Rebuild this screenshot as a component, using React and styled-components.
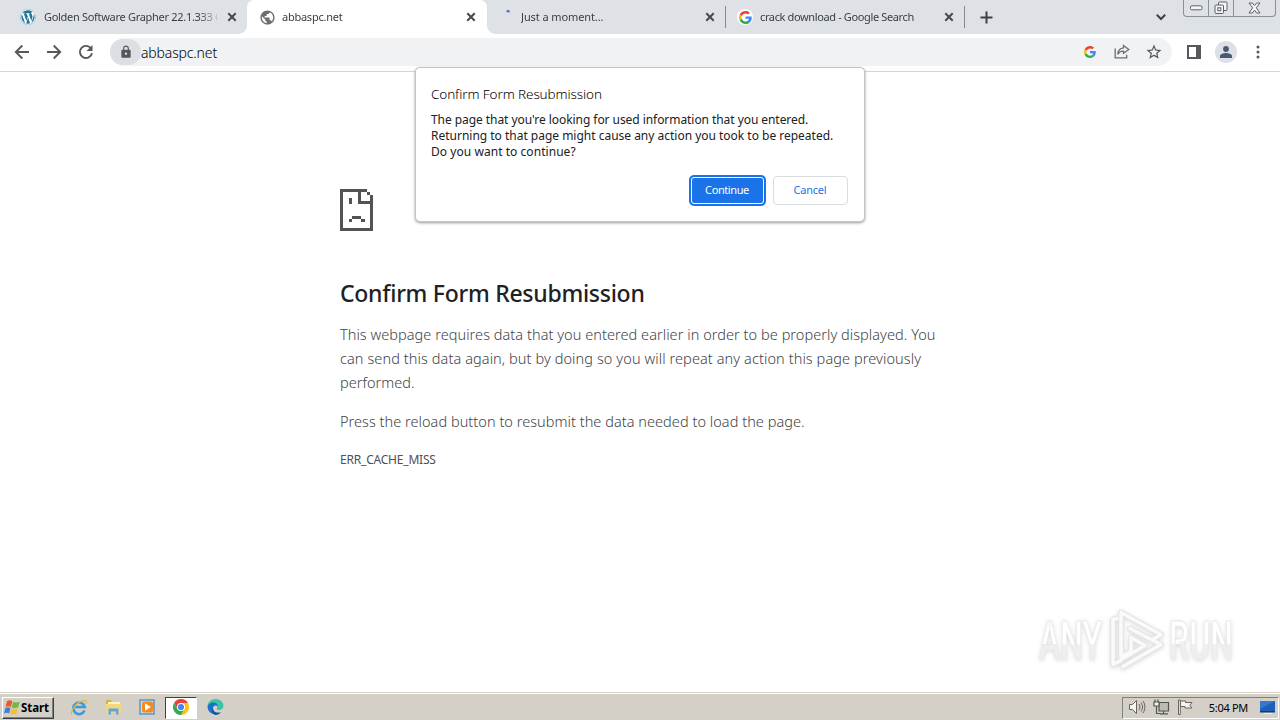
import styled, { createGlobalStyle, css } from "styled-components";
import { FaWordpress } from "react-icons/fa";
import { MdPublic, MdLock, MdStarBorder } from "react-icons/md";

const App = () => {
  return (
    <>
      <GlobalStyle />
      <Desktop>
        <TabStrip />
        <Toolbar />
        <Viewport>
          <ErrorPage />
          <Watermark />
        </Viewport>
        <Taskbar />
        <ConfirmDialog />
      </Desktop>
    </>
  );
};

const tabs = [
  { title: "Golden Software Grapher 22.1.333 C", icon: "wordpress", ls: "-0.3px", gap: 8 },
  { title: "abbaspc.net", icon: "globe", active: true, ls: "-0.25px", gap: 7 },
  { title: "Just a moment...", icon: "spinner", ls: "-0.1px", gap: 7 },
  { title: "crack download - Google Search", icon: "google", ls: "-0.37px", gap: 7 },
];

const TabStrip = () => (
  <Strip>
    {tabs.map((tab) => (
      <Tab key={tab.title} $active={tab.active} $divider={tab.icon === "spinner" || tab.icon === "google"}>
        <TabIcon>
          <Favicon name={tab.icon} />
        </TabIcon>
        <TabTitle $ls={tab.ls} $gap={tab.gap}>
          {tab.title}
        </TabTitle>
        <CloseIcon />
      </Tab>
    ))}
    <NewTab>
      <svg width="13" height="13" viewBox="0 0 13 13">
        <path d="M6.5 .5v12M.5 6.5h12" stroke="#3c4043" strokeWidth="2" />
      </svg>
    </NewTab>
    <Spacer />
    <TabSearch>
      <svg width="12" height="8" viewBox="0 0 12 8">
        <path d="M1.8 1.8 6 6l4.2-4.2" fill="none" stroke="#3c4043" strokeWidth="2" />
      </svg>
    </TabSearch>
    <Caption />
  </Strip>
);

const Favicon = ({ name }) => {
  if (name === "wordpress")
    return (
      <Round>
        <FaWordpress size={16} color="#21759b" />
      </Round>
    );
  if (name === "globe") return <MdPublic size={17} color="#6b6e72" />;
  if (name === "google")
    return (
      <Round>
        <GoogleLogo size={13} />
      </Round>
    );
  return (
    <svg width="16" height="16" viewBox="0 0 16 16">
      <path d="M8.7 1.7 11.6 2.8" stroke="#4a6fc4" strokeWidth="2" />
    </svg>
  );
};

const GoogleLogo = ({ size }) => (
  <svg width={size} height={size} viewBox="0 0 48 48">
    <path fill="#ea4335" d="M24 9.5c3.5 0 6.7 1.2 9.2 3.6l6.9-6.9C35.9 2.4 30.5 0 24 0 14.6 0 6.5 5.4 2.6 13.2l8 6.2C12.5 13.7 17.7 9.5 24 9.5z" />
    <path fill="#4285f4" d="M47 24.6c0-1.6-.2-3.1-.4-4.6H24v9h12.9c-.6 3-2.2 5.5-4.7 7.2l7.7 6C44.4 38 47 31.8 47 24.6z" />
    <path fill="#fbbc05" d="M10.5 28.6a14.5 14.5 0 0 1 0-9.2l-8-6.2a24 24 0 0 0 0 21.6z" />
    <path fill="#34a853" d="M24 48c6.5 0 11.9-2.1 15.9-5.8l-7.7-6c-2.2 1.5-4.9 2.3-8.2 2.3-6.3 0-11.6-4.2-13.5-9.900l-8 6.200C6.500 42.600 14.600 48 24 48z" />
  </svg>
);

const CloseIcon = () => (
  <svg width="10" height="10" viewBox="0 0 10 10">
    <path d="m1.3 1.3 7.4 7.4m0-7.4L1.3 8.7" stroke="#45484c" strokeWidth="2" />
  </svg>
);

const Caption = () => (
  <CaptionBar>
    <CaptionButton $w={24}>
      <svg width="13" height="6" viewBox="0 0 13 6">
        <rect x=".5" y=".8" width="11.5" height="4" rx="1.2" fill="#f4f5f7" stroke="#5c6068" />
      </svg>
    </CaptionButton>
    <CaptionButton $w={25}>
      <svg width="14" height="14" viewBox="0 0 14 14" fill="#f4f5f7" stroke="#5c6068">
        <rect x="4.5" y="1" width="8.5" height="8.5" rx="1" />
        <rect x="1" y="4" width="8.5" height="8.5" rx="1" />
        <rect x="3.8" y="6.8" width="3" height="3" />
      </svg>
    </CaptionButton>
    <CaptionButton $w={42}>
      <svg width="13" height="12" viewBox="0 0 13 12">
        <path
          d="M1 1h3.3l2.2 2.5L8.7 1H12L8.3 5.8 12 11H8.7L6.5 8.2 4.3 11H1l3.7-5.2z"
          fill="#f4f5f7"
          stroke="#5c6068"
        />
      </svg>
    </CaptionButton>
  </CaptionBar>
);

const Toolbar = () => (
  <Bar>
    <NavIcon viewBox="0 0 16 16">
      <path d="M15 8H2M8.3 1.5 1.8 8l6.5 6.5" />
    </NavIcon>
    <NavIcon viewBox="0 0 16 16">
      <path d="M1 8h13M7.7 1.5 14.2 8l-6.5 6.5" />
    </NavIcon>
    <NavIcon viewBox="0 0 16 16">
      <path d="M13.2 4.7A6.1 6.1 0 1 0 14 9.2" />
      <path d="M14.5 1v6h-6z" fill="#55585c" stroke="none" />
    </NavIcon>
    <Omnibox>
      <LockChip>
        <MdLock size={14} color="#54575b" />
      </LockChip>
      <Address>abbaspc.net</Address>
      <Spacer />
      <OmniIcons>
        <GoogleLogo size={12} />
        <svg width="16" height="15" viewBox="0 0 16 15" fill="none" stroke="#6a6d71" strokeWidth="1.3">
          <path d="M1.2 4.5v9.3h11.5v-3" />
          <path d="M9.5 1.5 14.8 5.5 9.5 9.3V7.1C7 7 5 7.9 3.8 10.4 4 6.8 6 4.3 9.5 3.9z" />
        </svg>
        <MdStarBorder size={18} color="#54575b" />
      </OmniIcons>
    </Omnibox>
    <RightIcons>
      <svg width="14" height="14" viewBox="0 0 14 14">
        <path d="M1 1h12v12H1z" fill="none" stroke="#55585c" strokeWidth="2" />
        <path d="M9 1h4v12H9z" fill="#55585c" />
      </svg>
      <Avatar>
        <svg width="12" height="12" viewBox="0 0 12 12" fill="#4a5775">
          <circle cx="6" cy="3" r="2.9" />
          <path d="M0 12V10c0-2 3.5-3 6-3s6 1 6 3v2z" />
        </svg>
      </Avatar>
      <svg width="4" height="14" viewBox="0 0 4 14" fill="#55585c">
        <circle cx="2" cy="2" r="1.5" />
        <circle cx="2" cy="7" r="1.5" />
        <circle cx="2" cy="12" r="1.5" />
      </svg>
    </RightIcons>
  </Bar>
);

const ErrorPage = () => (
  <Article>
    <svg width="33" height="42" viewBox="0 0 33 42" fill="#535353" shapeRendering="crispEdges">
      <path d="M0 0h27v3H3v36h27V15H18V3h3v9h9V9h3v33H0z" />
      <path d="M27 3h3v3h-3zM30 6h3v3h-3zM9 9h3v6H9zM12 27h9v3h-9zM9 30h3v3H9zM21 30h4v3h-4z" />
    </svg>
    <Heading>Confirm Form Resubmission</Heading>
    <Copy>
      <Line $ls="0.05px">This webpage requires data that you entered earlier in order to be properly displayed. You</Line>
      <Line $ls="0.09px">can send this data again, but by doing so you will repeat any action this page previously</Line>
      <Line $ls="0.03px">performed.</Line>
    </Copy>
    <Copy>
      <Line $ls="0.04px">Press the reload button to resubmit the data needed to load the page.</Line>
    </Copy>
    <ErrorCode>ERR_CACHE_MISS</ErrorCode>
  </Article>
);

const ConfirmDialog = () => (
  <Dialog>
    <DialogTitle>Confirm Form Resubmission</DialogTitle>
    <DialogText>
      <Line $ls="-0.06px">The page that you're looking for used information that you entered.</Line>
      <Line $ls="-0.01px">Returning to that page might cause any action you took to be repeated.</Line>
      <Line $ls="0.05px">Do you want to continue?</Line>
    </DialogText>
    <Actions>
      <Button $primary>Continue</Button>
      <Button>Cancel</Button>
    </Actions>
  </Dialog>
);

const markPath = "M86 52V8l40 22-8 5M82 14l-4 1v45l8-4M95 24l31 16-38 22M86 52l10-5V33l14 8-24 14";

const Watermark = () => (
  <Mark width="204" height="70" viewBox="0 0 204 70">
    <defs>
      <linearGradient id="sheen" x1="0" y1="0" x2="0" y2="1">
        <stop offset="0.55" stopColor="#fff" />
        <stop offset="0.56" stopColor="#efefef" />
      </linearGradient>
    </defs>
    <g fill="url(#sheen)" stroke="#e9e9e9" strokeWidth="0.8">
      <text x="4" y="53" textLength="63" lengthAdjust="spacingAndGlyphs">ANY</text>
      <text x="134" y="53" textLength="64" lengthAdjust="spacingAndGlyphs">RUN</text>
    </g>
    <g fill="none" strokeLinejoin="round" strokeLinecap="round" transform="translate(0 -1.5)">
      <path d={markPath} stroke="#e4e4e4" strokeWidth="5.5" />
      <path d={markPath} stroke="#fafafa" strokeWidth="3.5" />
    </g>
  </Mark>
);

const Taskbar = () => (
  <Task>
    <Start>
      <svg width="16" height="15" viewBox="0 0 16 15">
        <path d="M3 1.2c2-1.2 3.8-1 5.3 0L6.8 7c-1.5-1-3.3-1-5.3 0z" fill="#e8592b" />
        <path d="M9 1.7c1.5 1 4 1 6.8 0L14.2 7.3c-2 1-4.5 1.2-6.6.1z" fill="#74b83f" />
        <path d="M1.3 8c2-1.2 3.8-1 5.2 0l-1.4 5.5c-1.5-1-3.3-1-5.1 0z" fill="#3e82d0" />
        <path d="M7.4 8.4c1.5 1 4 1 6.5 0l-1.4 5.3c-2 1-4.5 1.1-6.5.1z" fill="#f5c02c" />
      </svg>
      <span>Start</span>
    </Start>
    <QuickLaunch>
      <Launcher>
        <svg width="18" height="17" viewBox="0 0 18 17" fill="none">
          <path d="M14.5 11.5a5.8 5.8 0 1 1 .3-3.5H5" stroke="#3c9bdb" strokeWidth="2.6" />
          <path d="M2 15.5C-.5 13 6 4 12 1.8c3.5-1.3 5 .2 3.8 2.8" stroke="#e8b73a" strokeWidth="1.3" />
        </svg>
      </Launcher>
      <Launcher>
        <svg width="17" height="16" viewBox="0 0 17 16">
          <path d="M1 1h5l1 2h8v10H1z" fill="#d9ae4c" />
          <path d="M3 3h12v6H3z" fill="#fbf3c4" />
          <path d="M1 5h15v8.5H1z" fill="#f2d680" />
          <path d="M3.5 15.5V9.5h10v6h-2.5v-3H6v3z" fill="#5fa9d6" />
        </svg>
      </Launcher>
      <Launcher>
        <svg width="17" height="16" viewBox="0 0 17 16">
          <rect x="1" y="1" width="14" height="14" fill="#c9def2" stroke="#5c93c8" strokeWidth="1.5" />
          <rect x="3" y="2.5" width="11" height="11" rx="2" fill="#f28a1c" />
          <path d="m6 4.200 6 3.800-6 3.800z" fill="#fff" />
        </svg>
      </Launcher>
      <Launcher $pressed>
        <svg width="16" height="16" viewBox="0 0 16 16">
          <path d="M1.07 4A8 8 0 0 1 14.93 4H8L4.5 10z" fill="#ea4335" />
          <path d="M14.93 4A8 8 0 0 1 8 16L11.5 10 8 4z" fill="#fbc116" />
          <path d="M1.07 4 4.5 10 8 12l3.5-2L8 16A8 8 0 0 1 1.07 4z" fill="#34a853" />
          <circle cx="8" cy="8" r="4" fill="#fff" />
          <circle cx="8" cy="8" r="3.1" fill="#4285f4" />
        </svg>
      </Launcher>
      <Launcher>
        <svg width="17" height="16" viewBox="0 0 17 16">
          <path d="M.6 8.5C0 4 3.5 0 8.5 0c4.5 0 8 3 8 6.5 0 3-2 4.5-4.5 4.5-2 0-2.7-.8-2-1.800.8-1.500.3-3.700-2.500-3.700-3 0-5.800 1-6.900 3z" fill="#3cc4a4" />
          <path d="M.6 8.5C.6 5.5 3.5 3.5 6.5 3.5c3 0 4.5 2 4 4.2-1.5-2-4.5-1.2-4.5 2 0 3 3 5 8 3.5A8 8 0 0 1 .6 8.5z" fill="#1673c8" />
          <path d="M6 9.7c0 3 3 5 8 3.5A8 8 0 0 1 8.5 16C5 14.5 4 10 6 9.7z" fill="#15509c" />
        </svg>
      </Launcher>
    </QuickLaunch>
    <Spacer />
    <Tray>
      <svg width="18" height="16" viewBox="0 0 18 16" fill="none" stroke="#66645f">
        <path d="M1.5 5.5h3l4-4v13l-4-4h-3z" fill="#f6f5f2" />
        <path d="M11 5c1.2 2 1.2 4 0 6M13 3.5c2 3 2 6 0 9M15 2c2.5 4 2.5 8 0 12" />
      </svg>
      <svg width="17" height="17" viewBox="0 0 17 17" fill="none" stroke="#56544f" strokeWidth="1.2">
        <path d="M6 3.5h9.5v8.5H6z" fill="#bdbbb5" />
        <path d="M1 3h5v4H1z" fill="#f6f5f2" />
        <path d="M2 3V.5M5 3V.5M3.5 7v7.5h4M7 14.8h8M10.5 12v3" />
      </svg>
      <svg width="16" height="16" viewBox="0 0 16 16" fill="#f6f5f2" stroke="#66645f">
        <path d="M1.5 1h1.8v14.5H1.5z" />
        <path d="M3.5 2h5v1.5H15L12.8 6.3 15 9H8V7.5H3.5z" />
      </svg>
      <Clock>5:04 PM</Clock>
      <svg width="17" height="15" viewBox="0 0 17 15">
        <path d="M1 1h15v10H1z" fill="#1b5fb8" />
        <path d="M1 1h15L1 9z" fill="#3478cc" />
        <path d="M1 11h15v1.5H1z" fill="#173a68" />
        <path d="M5 13h8v1H5z" fill="#e8eef5" />
      </svg>
    </Tray>
  </Task>
);

const GlobalStyle = createGlobalStyle`
  * {
    box-sizing: border-box;
  }
  body {
    margin: 0;
    overflow: hidden;
    background: #fff;
    font-family: "Noto Sans", "Open Sans", sans-serif;
  }
  svg {
    display: block;
    flex-shrink: 0;
  }
`;

const Desktop = styled.div`
  position: relative;
  display: flex;
  flex-direction: column;
  width: 1280px;
  height: 720px;
  background: #fff;
`;

const Spacer = styled.div`
  flex: 1;
`;

const Strip = styled.header`
  display: flex;
  height: 34px;
  padding-left: 8px;
  background: #dee1e6;
`;

const Tab = styled.div`
  position: relative;
  display: flex;
  align-items: center;
  width: ${({ $active }) => ($active ? 240 : 239)}px;
  height: 34px;
  padding: 0 ${({ $active }) => ($active ? 11 : 10)}px 0 12px;
  color: #3c4043;

  ${({ $active }) =>
    $active &&
    css`
      background: #fff;
      border-radius: 7px 7px 0 0;

      &::before,
      &::after {
        content: "";
        position: absolute;
        bottom: 0;
        width: 8px;
        height: 8px;
      }
      &::before {
        left: -8px;
        background: radial-gradient(circle at 0 0, transparent 7.5px, #fff 8px);
      }
      &::after {
        right: -8px;
        background: radial-gradient(circle at 100% 0, transparent 7.5px, #fff 8px);
      }
    `}

  ${({ $divider }) =>
    $divider &&
    css`
      padding: 0 10px 0 11px;
      border-right: 1px solid transparent;
      border-image: linear-gradient(transparent 7px, #85888d 7px, #85888d 27px, transparent 27px) 1;
    `}
`;

const TabIcon = styled.span`
  display: flex;
  align-items: center;
  justify-content: center;
  width: 16px;
  height: 16px;
`;

const Round = styled.span`
  display: flex;
  align-items: center;
  justify-content: center;
  flex-shrink: 0;
  width: 16px;
  height: 16px;
  border-radius: 50%;
  background: #fff;
`;

const TabTitle = styled.span`
  flex: 1;
  margin: 0 10px 0 ${({ $gap }) => $gap}px;
  overflow: hidden;
  white-space: nowrap;
  font-size: 11px;
  line-height: 16px;
  letter-spacing: ${({ $ls }) => $ls};
  mask-image: linear-gradient(to right, #000 155px, transparent 177px);
`;

const NewTab = styled.div`
  display: flex;
  align-items: center;
  margin-left: 15px;
`;

const TabSearch = styled.div`
  display: flex;
  align-items: center;
  margin-right: 16px;
`;

const CaptionBar = styled.div`
  display: flex;
  height: 17px;
  margin-right: 4px;
  border: 1px solid #8b8f96;
  border-top: 0;
  border-radius: 0 0 4px 4px;
`;

const CaptionButton = styled.span`
  display: flex;
  align-items: center;
  justify-content: center;
  width: ${({ $w }) => $w}px;

  & + & {
    border-left: 1px solid #8b8f96;
  }
`;

const Bar = styled.div`
  display: flex;
  align-items: center;
  height: 38px;
  padding: 0 20px 2px 14px;
  border-bottom: 1px solid #d3d5d8;
`;

const NavIcon = styled.svg`
  width: 16px;
  height: 16px;
  margin-right: 16px;
  fill: none;
  stroke: #55585c;
  stroke-width: 1.9;
`;

const Omnibox = styled.div`
  display: flex;
  align-items: center;
  width: 1063px;
  height: 28px;
  border-radius: 14px;
  background: #f0f2f4;
`;

const LockChip = styled.span`
  display: flex;
  align-items: center;
  justify-content: center;
  width: 31px;
  height: 26px;
  border-radius: 13px;
  background: #dcdfe3;
`;

const Address = styled.span`
  padding-top: 1px;
  color: #000;
  font-size: 14px;
  font-weight: 300;
  letter-spacing: -0.15px;
`;

const OmniIcons = styled.span`
  display: flex;
  align-items: center;
  gap: 18px;
  margin-right: 9px;

  svg:last-child {
    margin-left: -3px;
  }
`;

const RightIcons = styled.div`
  display: flex;
  align-items: center;
  gap: 14px;
  padding-left: 15px;

  svg:last-child {
    margin-left: 5px;
  }
`;

const Avatar = styled.span`
  display: flex;
  align-items: center;
  justify-content: center;
  width: 22px;
  height: 22px;
  border-radius: 50%;
  background: #dde0e5;

  && svg {
    margin-left: 0;
  }
`;

const Viewport = styled.main`
  position: relative;
  flex: 1;
  padding-top: 117px;
`;

const Article = styled.article`
  width: 600px;
  margin: 0 auto;
  color: #4d5054;
`;

const Heading = styled.h1`
  margin: 47px 0 0;
  color: #202124;
  font-size: 23px;
  font-weight: 500;
  line-height: 31px;
  letter-spacing: -0.27px;
  white-space: nowrap;
`;

const Copy = styled.p`
  margin: 13px 0 0;
  color: #404347;
  font-size: 14.5px;
  font-weight: 300;
  line-height: 24px;

  & + & {
    margin-top: 15px;
  }
`;

const Line = styled.span`
  display: block;
  white-space: nowrap;
  letter-spacing: ${({ $ls }) => $ls};
`;

const ErrorCode = styled.div`
  margin-top: 17px;
  font-size: 12px;
  line-height: 20px;
  letter-spacing: -0.2px;
`;

const Mark = styled.svg`
  position: absolute;
  right: 41px;
  bottom: 16px;
  overflow: visible;
  font-family: Roboto, sans-serif;
  font-size: 53px;
  font-weight: 500;
  filter: drop-shadow(0 1px 2px rgba(0, 0, 0, 0.15));
`;

/* hangs from the toolbar over the page */
const Dialog = styled.div`
  position: absolute;
  top: 67px;
  left: 415px;
  width: 450px;
  height: 155px;
  padding: 17px 16px 16px 15px;
  border: 1px solid #c4c4c6;
  border-radius: 5px;
  background: #fff;
  box-shadow: 0 1px 3px rgba(0, 0, 0, 0.4);
  color: #202124;
`;

const DialogTitle = styled.div`
  color: #000;
  font-size: 13.5px;
  font-weight: 300;
  line-height: 18px;
  letter-spacing: -0.1px;
  white-space: nowrap;
`;

const DialogText = styled.div`
  margin-top: 9px;
  font-size: 12px;
  line-height: 16px;
`;

const Actions = styled.div`
  display: flex;
  align-items: center;
  justify-content: flex-end;
  gap: 9px;
  margin-top: 16px;
`;

const Button = styled.button`
  width: 75px;
  height: 29px;
  padding: 0 1px 2px 0;
  border: 1px solid #dadce0;
  border-radius: 4px;
  background: #fff;
  color: #1a73e8;
  font-family: inherit;
  font-size: 11px;
  letter-spacing: -0.2px;

  ${({ $primary }) =>
    $primary &&
    css`
      width: 73px;
      height: 27px;
      border-color: #fff;
      border-radius: 3px;
      background: #1a73e8;
      color: #fff;
      letter-spacing: -0.4px;
      box-shadow: 0 0 0 2px #1a73e8;
    `}
`;

const Task = styled.footer`
  display: flex;
  align-items: center;
  height: 28px;
  padding: 3px 1px 1px 2px;
  border-top: 1px solid #d4d0c8;
  box-shadow: inset 0 1px #fff;
  background: #d4d0c8;
`;

const Start = styled.div`
  display: flex;
  align-items: center;
  gap: 1px;
  width: 52px;
  height: 22px;
  padding: 0 0 1px 1px;
  border: 1px solid;
  border-color: #fff #404040 #404040 #fff;
  box-shadow: inset -1px -1px #808080;
  color: #000;
  font-size: 11.5px;
  font-weight: 700;
  letter-spacing: -0.1px;
`;

const QuickLaunch = styled.div`
  display: flex;
  gap: 2px;
  margin-left: 9px;
`;

const Launcher = styled.span`
  display: flex;
  align-items: center;
  justify-content: center;
  width: 32px;
  height: 22px;
  padding-bottom: 1px;
  border: 1px solid transparent;

  ${({ $pressed }) =>
    $pressed &&
    css`
      border-color: #404040 #fff #fff #404040;
      background: #fff;
    `}
`;

const Tray = styled.div`
  display: flex;
  align-items: center;
  gap: 7px;
  height: 22px;
  padding: 0 2px 1px 5px;
  border: 1px solid;
  border-color: #808080 #fff #fff #808080;
`;

const Clock = styled.span`
  margin: 0 4px 0 9px;
  color: #000;
  font-size: 11px;
  letter-spacing: -0.3px;
  white-space: nowrap;
`;

export default App;
